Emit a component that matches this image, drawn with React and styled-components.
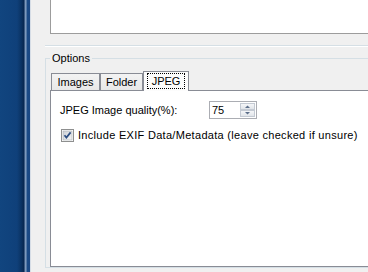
import React from 'react';
import styled, { createGlobalStyle } from 'styled-components';

const GlobalStyle = createGlobalStyle`
  html, body {
    margin: 0;
    padding: 0;
    background: #f0f0f0;
    overflow: hidden;
  }
  body {
    font-family: "Liberation Sans", Arial, sans-serif;
    font-size: 11px;
    color: #000;
  }
`;

const Screen = styled.div`
  width: 368px;
  height: 272px;
  display: flex;
  overflow: hidden;
  background: #f0f0f0;
`;

const DesktopEdge = styled.div`
  flex: 0 0 31px;
  background: linear-gradient(
    to right,
    #11457f 0,
    #0f407a 17px,
    #0b3465 21px,
    #08274f 24px,
    #6f8db3 25px,
    #8ba6c6 26px,
    #1b4b86 27px,
    #1a4884 30px,
    #d6dde6 30px,
    #d6dde6 31px
  );
`;

const Main = styled.div`
  flex: 1;
  margin-right: -12px;
  padding-left: 14px;
  display: flex;
  flex-direction: column;
  & > * {
    flex-shrink: 0;
  }
`;

const TopArea = styled.div`
  height: 45px;
  padding-left: 5px;
  border-bottom: 1px solid #d5dfe5;
  box-shadow: 0 1px 0 #fff;
`;

const ListPanel = styled.div`
  height: 33px;
  background: #fff;
  border-left: 1px solid #9c9c9c;
  border-bottom: 1px solid #9c9c9c;
`;

const GroupBox = styled.fieldset`
  margin: 6px 0 0 0;
  padding: 6px 0 0 4px;
  min-width: 0;
  border: 1px solid #d5dfe5;
`;

const GroupTitle = styled.legend`
  padding: 0 2px;
  line-height: 13px;
`;

const TabStrip = styled.div`
  display: flex;
  align-items: flex-end;
  height: 19px;
  padding-left: 1px;
`;

const Tab = styled.div`
  box-sizing: border-box;
  width: ${(p) => p.$width}px;
  height: ${(p) => (p.$selected ? 20 : 17)}px;
  margin-bottom: ${(p) => (p.$selected ? -1 : 0)}px;
  border: 1px solid #898c95;
  border-bottom: none;
  background: ${(p) =>
    p.$selected ? '#fcfcfc' : 'linear-gradient(#f3f3f3, #e8e8e8)'};
  display: flex;
  justify-content: center;
  align-items: ${(p) => (p.$selected ? 'flex-start' : 'center')};
  padding-top: ${(p) => (p.$selected ? 1 : 0)}px;
  line-height: 14px;
  position: relative;
  z-index: ${(p) => (p.$selected ? 1 : 0)};
`;

const FocusLabel = styled.span`
  border: 1px dotted #000;
  padding: 0 4px;
  line-height: 14px;
`;

const TabPanel = styled.div`
  box-sizing: border-box;
  height: 177px;
  background: #fff;
  border: 1px solid #898c95;
  padding: 10px 0 0 9px;
`;

const FieldRow = styled.div`
  display: grid;
  grid-template-columns: 149px auto;
  align-items: center;
`;

const SpinBox = styled.div`
  box-sizing: border-box;
  width: 48px;
  height: 18px;
  border: 1px solid #abadb3;
  background: #fff;
  display: flex;
  align-items: center;
  justify-content: space-between;
  padding: 1px 1px 1px 2px;
`;

const SpinValue = styled.span`
  line-height: 14px;
`;

const SpinButtons = styled.div`
  width: 15px;
  height: 14px;
  display: flex;
  align-items: center;
  justify-content: center;
`;

const CheckRow = styled.label`
  display: flex;
  align-items: center;
  gap: 4px;
  margin-top: 9px;
  padding-left: 1px;
  letter-spacing: 0.3px;
  line-height: 14px;
`;

const Check = () => (
  <svg width="13" height="13" viewBox="0 0 13 13">
    <defs>
      <linearGradient id="cbfill" x1="0" y1="0" x2="1" y2="1">
        <stop offset="0" stopColor="#cbcfd5" />
        <stop offset="1" stopColor="#f6f6f6" />
      </linearGradient>
    </defs>
    <rect x="0.5" y="0.5" width="12" height="12" fill="#fff" stroke="#8e8f8f" />
    <rect x="2" y="2" width="9" height="9" fill="url(#cbfill)" stroke="#a9adb3" strokeWidth="0.6" />
    <path d="M3.5 6.2 L5.4 8.6 L9.6 3.4" fill="none" stroke="#2c4d82" strokeWidth="1.7" />
  </svg>
);

const SpinArrows = () => (
  <svg width="15" height="14" viewBox="0 0 15 14">
    <defs>
      <linearGradient id="spfill" x1="0" y1="0" x2="0" y2="1">
        <stop offset="0" stopColor="#f7f8fa" />
        <stop offset="1" stopColor="#dfe3e8" />
      </linearGradient>
    </defs>
    <rect x="0.5" y="0.5" width="14" height="6" fill="url(#spfill)" stroke="#c4cad3" />
    <rect x="0.5" y="7.5" width="14" height="6" fill="url(#spfill)" stroke="#c4cad3" />
    <path d="M5 5 L7.5 2.5 L10 5 Z" fill="#5d6f8a" />
    <path d="M5 9 L7.5 11.5 L10 9 Z" fill="#5d6f8a" />
  </svg>
);

const App = () => (
  <>
    <GlobalStyle />
    <Screen>
      <DesktopEdge />
      <Main>
        <TopArea>
          <ListPanel />
        </TopArea>
        <GroupBox>
          <GroupTitle>Options</GroupTitle>
          <TabStrip>
            <Tab $width={49}>Images</Tab>
            <Tab $width={43}>Folder</Tab>
            <Tab $width={46} $selected>
              <FocusLabel>JPEG</FocusLabel>
            </Tab>
          </TabStrip>
          <TabPanel>
            <FieldRow>
              <span>JPEG Image quality(%):</span>
              <SpinBox>
                <SpinValue>75</SpinValue>
                <SpinButtons>
                  <SpinArrows />
                </SpinButtons>
              </SpinBox>
            </FieldRow>
            <CheckRow>
              <Check />
              Include EXIF Data/Metadata (leave checked if unsure)
            </CheckRow>
          </TabPanel>
        </GroupBox>
      </Main>
    </Screen>
  </>
);

export default App;
